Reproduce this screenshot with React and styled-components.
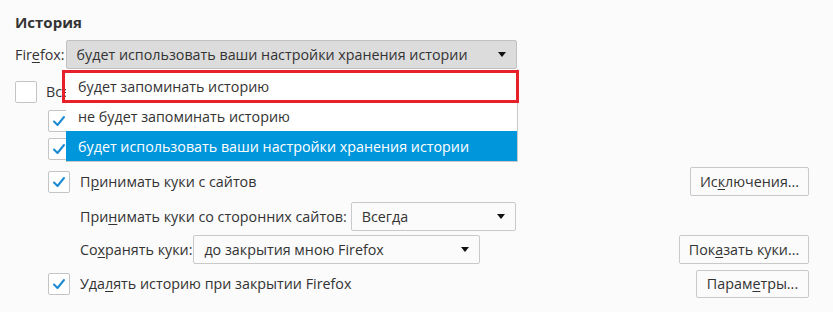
import React from 'react'
import styled, { createGlobalStyle } from 'styled-components'

const GlobalStyle = createGlobalStyle`
  html, body {
    margin: 0;
    background: #fbfbfb;
  }
  body {
    font-family: 'Open Sans', 'Noto Sans', sans-serif;
    font-size: 14.3px;
    color: #333;
  }
`

const Page = styled.div`
  position: relative;
  width: 833px;
  height: 312px;
  overflow: hidden;
  padding: 11px 24px 0 15px;
  box-sizing: border-box;
`

const Heading = styled.h2`
  margin: 0 0 7px;
  font-size: 15px;
  font-weight: 700;
  line-height: 22px;
  color: #333;
`

const Row = styled.div`
  display: flex;
  align-items: center;
  justify-content: space-between;
  height: ${(p) => p.$h || 29}px;
  margin-top: ${(p) => p.$mt || 0}px;
  padding-left: ${(p) => p.$indent || 0}px;
`

const Group = styled.div`
  display: flex;
  align-items: center;
  gap: ${(p) => p.$gap ?? 4}px;
`

const Label = styled.span`
  line-height: 20px;
  white-space: nowrap;
`

const Key = styled.span`
  text-decoration: underline;
  text-underline-offset: 2px;
`

const Select = styled.div`
  display: flex;
  align-items: center;
  justify-content: space-between;
  box-sizing: border-box;
  width: ${(p) => p.$w}px;
  height: 29px;
  padding: 0 10px;
  border: 1px solid ${(p) => (p.$open ? '#c1c1c1' : '#c9c9c9')};
  border-radius: 2px;
  background: ${(p) => (p.$open ? '#dcdcdc' : '#fbfbfb')};
  white-space: nowrap;
`

const Arrow = styled.span`
  width: 0;
  height: 0;
  border-left: 4px solid transparent;
  border-right: 4px solid transparent;
  border-top: 5px solid #111;
`

const Menu = styled.ul`
  position: absolute;
  left: 66px;
  top: 69px;
  width: 452px;
  margin: 0;
  padding: 2px 0 0;
  list-style: none;
  background: #fff;
  border-right: 1px solid #c9c9c9;
  border-bottom: 1px solid #c9c9c9;
  box-sizing: border-box;
  z-index: 2;
`

const Option = styled.li`
  height: 30px;
  display: flex;
  align-items: center;
  padding-left: 12px;
  background: ${(p) => (p.$active ? '#0096dc' : 'transparent')};
  color: ${(p) => (p.$active ? '#fff' : '#333')};
  white-space: nowrap;
`

const Highlight = styled.div`
  position: absolute;
  left: 62px;
  top: 70px;
  width: 457px;
  height: 33px;
  border: 3px solid #e8202a;
  box-sizing: border-box;
  z-index: 3;
`

const Box = styled.span`
  flex: none;
  display: flex;
  align-items: center;
  justify-content: center;
  width: 22px;
  height: 22px;
  box-sizing: border-box;
  border: 1px solid #c4c4c4;
  border-radius: 2px;
  background: #fff;
`

const Button = styled.div`
  display: flex;
  align-items: center;
  justify-content: center;
  box-sizing: border-box;
  width: ${(p) => p.$w}px;
  height: ${(p) => p.$h || 29}px;
  border: 1px solid #c9c9c9;
  border-radius: 2px;
  background: #fbfbfb;
  white-space: nowrap;
`

function Checkbox({ checked }) {
  return (
    <Box>
      {checked && (
        <svg width="14" height="12" viewBox="0 0 14 12">
          <path d="M2 6.5 L5.5 10 L12 2" fill="none" stroke="#1a8ad4" strokeWidth="2" strokeLinecap="round" strokeLinejoin="round" />
        </svg>
      )}
    </Box>
  )
}

export default function App() {
  return (
    <>
      <GlobalStyle />
      <Page>
        <Heading>История</Heading>
        <Row>
          <Group $gap={1}>
            <Label>
              Fir<Key>e</Key>fox:
            </Label>
            <Select $w={451} $open>
              будет использовать ваши настройки хранения истории
              <Arrow />
            </Select>
          </Group>
        </Row>

        <Row $mt={10} $h={26}>
          <Group $gap={9}>
            <Checkbox />
            <Label>Всегда работать в режиме приватного просмотра</Label>
          </Group>
        </Row>
        <Row $mt={2} $h={28} $indent={33}>
          <Group $gap={10}>
            <Checkbox checked />
            <Label>Помнить историю посещений и загрузок</Label>
          </Group>
        </Row>
        <Row $h={28} $indent={33}>
          <Group $gap={10}>
            <Checkbox checked />
            <Label>Помнить историю поиска и данных форм</Label>
          </Group>
        </Row>
        <Row $mt={4} $h={29} $indent={33}>
          <Group $gap={10}>
            <Checkbox checked />
            <Label>
              П<Key>р</Key>инимать куки с сайтов
            </Label>
          </Group>
          <Button $w={119}>
            Ис<Key>к</Key>лючения...
          </Button>
        </Row>
        <Row $mt={6} $h={29} $indent={65}>
          <Group $gap={4}>
            <Label>
              При<Key>н</Key>имать куки со сторонних сайтов:
            </Label>
            <Select $w={165}>
              Всегда
              <Arrow />
            </Select>
          </Group>
        </Row>
        <Row $mt={4} $h={29} $indent={65}>
          <Group $gap={1}>
            <Label>
              Со<Key>х</Key>ранять куки:
            </Label>
            <Select $w={287}>
              до закрытия мною Firefox
              <Arrow />
            </Select>
          </Group>
          <Button $w={130}>
            Пок<Key>а</Key>зать куки...
          </Button>
        </Row>
        <Row $mt={5} $h={29} $indent={33}>
          <Group $gap={10}>
            <Checkbox checked />
            <Label>
              Уда<Key>л</Key>ять историю при закрытии Firefox
            </Label>
          </Group>
          <Button $w={113} $h={28}>
            Парам<Key>е</Key>тры...
          </Button>
        </Row>

        <Menu>
          <Option>будет запоминать историю</Option>
          <Option>не будет запоминать историю</Option>
          <Option $active>будет использовать ваши настройки хранения истории</Option>
        </Menu>
        <Highlight />
      </Page>
    </>
  )
}
